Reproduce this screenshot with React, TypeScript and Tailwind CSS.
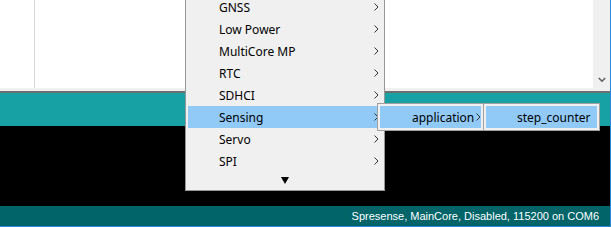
import React from "react";

const Chevron = () => (
  <svg width="5" height="8" viewBox="0 0 5 8" className="block">
    <polyline points="0.5,0.5 4,4 0.5,7.5" fill="none" stroke="#333" strokeWidth="1" />
  </svg>
);

const items = ["GNSS", "Low Power", "MultiCore MP", "RTC", "SDHCI", "Sensing", "Servo", "SPI"];

export default function App() {
  return (
    <div
      className="relative w-[611px] h-[227px] overflow-hidden flex flex-col border-r border-b border-[#2b88d8] bg-white"
      style={{ fontFamily: '"Noto Sans", "Open Sans", sans-serif' }}
    >
      {/* editor */}
      <div className="h-[88px] flex">
        <div className="w-[34px] bg-white" />
        <div className="w-px bg-[#d6d6d6]" />
        <div className="flex-1 bg-white" />
        <div className="w-[17px] bg-[#f0f0f0] flex flex-col justify-end items-center pb-[5px]">
          <svg width="8" height="6" viewBox="0 0 8 6" className="block">
            <polyline points="0.8,1 4,4.2 7.2,1" fill="none" stroke="#606060" strokeWidth="1.6" />
          </svg>
        </div>
      </div>
      <div className="h-[3px] bg-[#f0f0f0]" />
      <div className="h-[2px] bg-[#6e6e6e]" />
      <div className="h-[33px] bg-[#17a1a5]" />
      <div className="h-[80px] bg-black" />
      <div
        className="h-[20px] bg-[#006468] flex items-center justify-end pr-[11px] text-white text-[11px]"
        style={{ fontFamily: '"Liberation Sans", Arial, sans-serif' }}
      >
        Spresense, MainCore, Disabled, 115200 on COM6
      </div>

      {/* main menu */}
      <div className="absolute left-[185px] top-[-7px] w-[200px] h-[198px] bg-[#f0f0f0] border border-[#979797] p-[2px] flex flex-col">
        {items.map((t) => (
          <div
            key={t}
            className={`h-[22px] flex items-center justify-between pl-[31px] pr-[3px] text-[12px] text-black ${
              t === "Sensing" ? "bg-[#91c9f7]" : ""
            }`}
          >
            <span className="pt-[2px]">{t}</span>
            <Chevron />
          </div>
        ))}
        <div className="flex-1 flex items-center justify-center">
          <svg width="8" height="7" viewBox="0 0 8 7" className="block">
            <polygon points="0,0 8,0 4,7" fill="#000" />
          </svg>
        </div>
      </div>

      {/* submenu 1 */}
      <div className="absolute left-[377px] top-[103px] w-[107px] h-[28px] bg-[#f0f0f0] border border-[#a0a0a0] p-[2px]">
        <div className="h-[22px] bg-[#91c9f7] flex items-center justify-between pl-[32px] pr-[0px] text-[12px] text-black">
          <span className="pt-[2px]">application</span>
          <Chevron />
        </div>
      </div>

      {/* submenu 2 */}
      <div className="absolute left-[483px] top-[103px] w-[117px] h-[28px] bg-[#f0f0f0] border border-[#a0a0a0] p-[2px]">
        <div className="h-[22px] bg-[#91c9f7] flex items-center pl-[31px] text-[12px] text-black">
          <span className="pt-[2px]">step_counter</span>
        </div>
      </div>
    </div>
  );
}
